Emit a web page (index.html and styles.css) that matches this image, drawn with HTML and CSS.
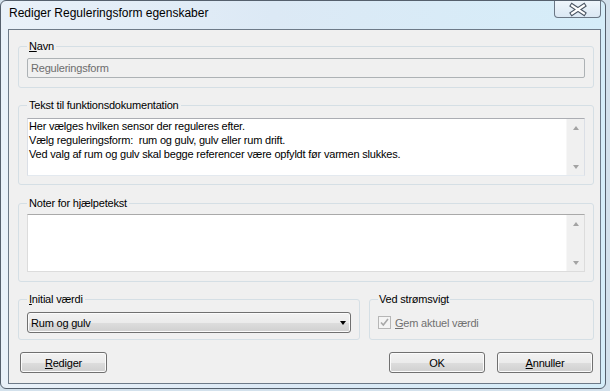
FILE: index.html
```html
<!DOCTYPE html>
<html lang="da">
<head>
  <meta charset="UTF-8">
  <meta name="viewport" content="width=device-width, initial-scale=1.0">
  <title>Rediger Reguleringsform egenskaber</title>
  <link rel="stylesheet" href="styles.css">
</head>
<body>
  <div class="window">
    <div class="titlebar">
      <span class="title">Rediger Reguleringsform egenskaber</span>
      <button class="close" aria-label="Luk">
        <svg width="46" height="17" viewBox="0 0 46 17">
          <path d="M17.5 4.5 L29.5 12.5 M29.5 4.5 L17.5 12.5" stroke="#4a5563" stroke-width="4.4" stroke-linecap="square" fill="none"/>
          <path d="M17.5 4.5 L29.5 12.5 M29.5 4.5 L17.5 12.5" stroke="#ffffff" stroke-width="2.2" stroke-linecap="square" fill="none"/>
        </svg>
      </button>
    </div>

    <div class="client">
      <fieldset class="group group-name">
        <legend><u>N</u>avn</legend>
        <div class="edit edit-disabled">Reguleringsform</div>
      </fieldset>

      <fieldset class="group group-doc">
        <legend>Tekst til funktionsdokumentation</legend>
        <div class="memo">
          <div class="memo-text">Her vælges hvilken sensor der reguleres efter.
Vælg reguleringsform:  rum og gulv, gulv eller rum drift.
Ved valg af rum og gulv skal begge referencer være opfyldt før varmen slukkes.</div>
          <div class="scrollbar">
            <span class="arrow arrow-up"></span>
            <span class="arrow arrow-down"></span>
          </div>
        </div>
      </fieldset>

      <fieldset class="group group-notes">
        <legend>Noter for hjælpetekst</legend>
        <div class="memo memo-plain">
          <div class="memo-text"></div>
          <div class="scrollbar">
            <span class="arrow arrow-up"></span>
            <span class="arrow arrow-down"></span>
          </div>
        </div>
      </fieldset>

      <div class="bottom-row">
        <fieldset class="group group-initial">
          <legend><u>I</u>nitial værdi</legend>
          <div class="combo">
            <span>Rum og gulv</span>
            <span class="combo-arrow"></span>
          </div>
        </fieldset>

        <fieldset class="group group-power">
          <legend>Ved strømsvigt</legend>
          <label class="check">
            <span class="checkbox">
              <svg width="11" height="11" viewBox="0 0 11 11">
                <path d="M2 5.5 L4.3 8 L9 2" stroke="#a8a8a8" stroke-width="1.6" fill="none"/>
              </svg>
            </span>
            <span class="check-label"><u>G</u>em aktuel værdi</span>
          </label>
        </fieldset>
      </div>

      <div class="buttons">
        <button class="btn btn-edit"><u>R</u>ediger</button>
        <button class="btn btn-ok">OK</button>
        <button class="btn btn-cancel"><u>A</u>nnuller</button>
      </div>
    </div>
  </div>
</body>
</html>
```

FILE: styles.css
```css
body, html {
  margin: 0;
  padding: 0;
  width: 610px;
  height: 391px;
  overflow: hidden;
  background-color: #d3e1ec;
  font-family: 'Liberation Sans', Arial, sans-serif;
}

.window {
  width: 606px;
  height: 389px;
  box-sizing: border-box;
  border: 1px solid #55606d;
  border-radius: 6px;
  padding: 0 4px 4px 7px;
  display: flex;
  flex-direction: column;
  background: linear-gradient(to right, #e9f1f9 0%, #dce9f5 45%, #d5edf9 100%);
}

.titlebar {
  height: 28px;
  display: flex;
  align-items: flex-start;
}

.title {
  padding: 4px 0 0 1px;
  font-size: 12px;
  line-height: 16px;
  color: #000;
}

.close {
  margin-left: auto;
  width: 47px;
  height: 17px;
  padding: 0;
  border: 1px solid #6a7684;
  border-top: none;
  border-radius: 0 0 4px 4px;
  background: linear-gradient(#eef5fb, #dbe8f3);
  box-sizing: border-box;
  display: flex;
  align-items: center;
  justify-content: center;
}

.close svg {
  display: block;
}

.client {
  flex: 1;
  display: flex;
  flex-direction: column;
  border: 1px solid #6d7a88;
  background-color: #f0f0f0;
  padding: 10px 6px 0 9px;
  font-size: 11px;
  letter-spacing: -0.2px;
  color: #000;
}

.group {
  margin: 0;
  min-width: 0;
  border: 1px solid #d5dfe5;
  border-radius: 3px;
  padding: 5px 8px 9px;
}

.group legend {
  padding: 0 2px;
  font-size: 11px;
  line-height: 13px;
}

.group-doc {
  margin-top: 11px;
  padding-top: 6px;
  padding-bottom: 8px;
}

.group-notes {
  margin-top: 12px;
  padding-top: 4px;
  padding-bottom: 9px;
}

.edit {
  height: 20px;
  box-sizing: border-box;
  line-height: 18px;
  padding-left: 3px;
  border: 1px solid #adb2b5;
  border-radius: 2px;
}

.edit-disabled {
  background-color: #f0f0f0;
  color: #6d6d6d;
}

.memo {
  height: 58px;
  box-sizing: border-box;
  display: flex;
  background-color: #fff;
  border: 1px solid #dbdfe6;
  border-top-color: #abadb3;
  border-bottom-color: #e3e9ef;
}

.memo-plain {
  border-color: #dcdcdc;
  border-top-color: #a9a9a9;
}

.memo-text {
  flex: 1;
  padding: 0 0 0 1px;
  line-height: 14px;
  white-space: pre-wrap;
}

.scrollbar {
  width: 17px;
  display: flex;
  flex-direction: column;
  justify-content: space-between;
  background-color: #f0f0f0;
  border-left: 1px solid #f7f7f7;
}

.arrow {
  height: 17px;
  display: flex;
  align-items: center;
  justify-content: center;
}

.arrow::after {
  content: "";
  border-left: 3.5px solid transparent;
  border-right: 3.5px solid transparent;
}

.arrow-up::after {
  border-bottom: 4px solid #a3a3a3;
}

.arrow-down::after {
  border-top: 4px solid #a3a3a3;
}

.bottom-row {
  margin-top: 11px;
  display: flex;
  gap: 9px;
}

.group-initial {
  width: 342px;
  box-sizing: border-box;
  padding-top: 6px;
  padding-bottom: 6px;
}

.group-power {
  flex: 1;
  padding-top: 6px;
  padding-bottom: 6px;
}

.group-power legend {
  padding: 0 1px;
}

.combo,
.btn {
  height: 21px;
  box-sizing: border-box;
  border: 1px solid #707070;
  border-radius: 3px;
  background: linear-gradient(#f2f2f2 0%, #ebebeb 50%, #dddddd 51%, #cfcfcf 100%);
  box-shadow: inset 0 0 0 1px #fbfbfb;
  font-family: 'Liberation Sans', Arial, sans-serif;
  font-size: 11px;
  letter-spacing: -0.2px;
  color: #000;
}

.combo {
  display: flex;
  align-items: center;
  padding: 0 0 0 3px;
}

.combo-arrow {
  margin-left: auto;
  margin-right: 4px;
  border-left: 3.5px solid transparent;
  border-right: 3.5px solid transparent;
  border-top: 4px solid #000;
}

.check {
  height: 21px;
  display: flex;
  align-items: center;
  gap: 4px;
  color: #707070;
}

.checkbox {
  width: 13px;
  height: 13px;
  box-sizing: border-box;
  border: 1px solid #b6b6b6;
  background-color: #f4f4f4;
  display: flex;
  align-items: center;
  justify-content: center;
}

.checkbox svg {
  display: block;
}

.buttons {
  margin-top: 12px;
  display: flex;
  gap: 12px;
}

.btn {
  padding: 0;
  text-align: center;
}

.btn-edit {
  width: 87px;
  margin-left: 2px;
}

.btn-ok {
  width: 96px;
  margin-left: auto;
}

.btn-cancel {
  width: 96px;
  margin-right: 1px;
}
```
